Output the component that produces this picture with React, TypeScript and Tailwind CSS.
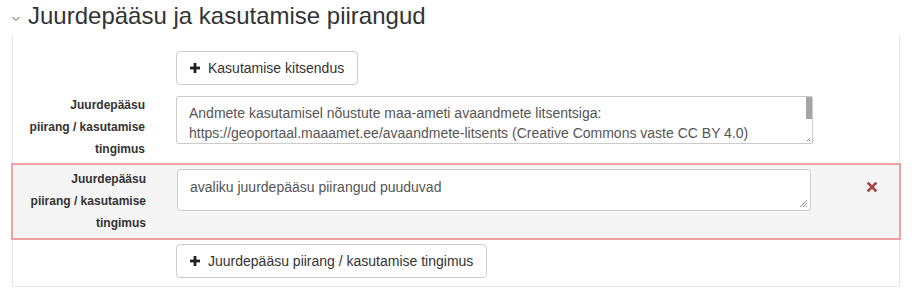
import React from "react";

const Plus = () => (
  <svg width="10" height="10" viewBox="0 0 10 10" className="shrink-0">
    <rect x="3.6" y="0" width="2.8" height="10" fill="#222" />
    <rect x="0" y="3.6" width="10" height="2.8" fill="#222" />
  </svg>
);

const Remove = () => (
  <svg width="10" height="10" viewBox="0 0 10 10">
    <path d="M1.5 1.5 L8.5 8.5 M8.5 1.5 L1.5 8.5" stroke="#a94442" strokeWidth="2.6" strokeLinecap="square" />
  </svg>
);

const Resize = () => (
  <svg width="10" height="10" viewBox="0 0 10 10" className="absolute right-[2px] bottom-[2px]">
    <path d="M9 2 L2 9 M9 5 L5 9 M9 8 L8 9" stroke="#777" strokeWidth="0.8" />
  </svg>
);

const Label = () => (
  <div className="text-right text-[12px] font-bold leading-[22px] text-[#333]">
    Juurdepääsu
    <br />
    piirang / kasutamise
    <br />
    tingimus
  </div>
);

export default function App() {
  return (
    <div className="w-[915px] h-[299px] bg-white font-['Liberation_Sans',Arial,sans-serif] text-[#333] overflow-hidden">
      <div className="flex items-center h-[35px] pl-[12px] pb-[4px]">
        <svg width="8" height="6" viewBox="0 0 8 6" className="mt-[6px]">
          <path d="M0.5 1 L4 4.5 L7.5 1" stroke="#555" strokeWidth="1" fill="none" />
        </svg>
        <h2 className="ml-[8px] text-[24px] leading-[28px] text-[#333]">Juurdepääsu ja kasutamise piirangud</h2>
      </div>
      <div className="ml-[12px] w-[888px] border-x border-b border-[#e6e6e6] pt-[16px] pb-[8px]">
        <div className="pl-[163px]">
          <button className="h-[34px] px-[13px] flex items-center gap-[8px] border border-[#ccc] rounded-[4px] bg-white text-[14px] text-[#333]">
            <Plus />
            <span>Kasutamise kitsendus</span>
          </button>
        </div>
        <div className="flex items-start mt-[9px]">
          <div className="w-[132px]">
            <Label />
          </div>
          <div className="relative ml-[31px] mt-[2px] w-[637px] h-[48px] border border-[#ccc] rounded-[2px] bg-white overflow-hidden px-[12px] pt-[6px] text-[14px] leading-[20px] text-[#555] whitespace-nowrap">
            <div>Andmete kasutamisel nõustute maa-ameti avaandmete litsentsiga:</div>
            <div>https://geoportaal.maaamet.ee/avaandmete-litsents (Creative Commons vaste CC BY 4.0)</div>
            <div>&nbsp;</div>
            <div className="absolute right-0 top-0 w-[6px] h-[22px] bg-[#a6a6a6]" />
            <svg width="5" height="5" viewBox="0 0 5 5" className="absolute right-[1px] bottom-[1px]">
              <path d="M4 1 L1 4 M4 3 L3 4" stroke="#666" strokeWidth="0.8" />
            </svg>
          </div>
        </div>
        <div className="flex items-start -mx-[2px] mt-[3px] border-2 border-[#f2a0a4] bg-[#f5f5f5]">
          <div className="w-[133px] mt-[3px] mb-[4px]">
            <Label />
          </div>
          <div className="relative ml-[31px] mt-[4px] w-[634px] h-[42px] border border-[#ccc] rounded-[3px] bg-white px-[12px] pt-[7px] text-[14px] leading-[20px] text-[#555]">
            avaliku juurdepääsu piirangud puuduvad
            <Resize />
          </div>
          <div className="ml-[56px] mt-[17px]">
            <Remove />
          </div>
        </div>
        <div className="pl-[163px] mt-[4px]">
          <button className="h-[34px] px-[13px] flex items-center gap-[8px] border border-[#ccc] rounded-[4px] bg-white text-[14px] text-[#333]">
            <Plus />
            <span>Juurdepääsu piirang / kasutamise tingimus</span>
          </button>
        </div>
      </div>
    </div>
  );
}
